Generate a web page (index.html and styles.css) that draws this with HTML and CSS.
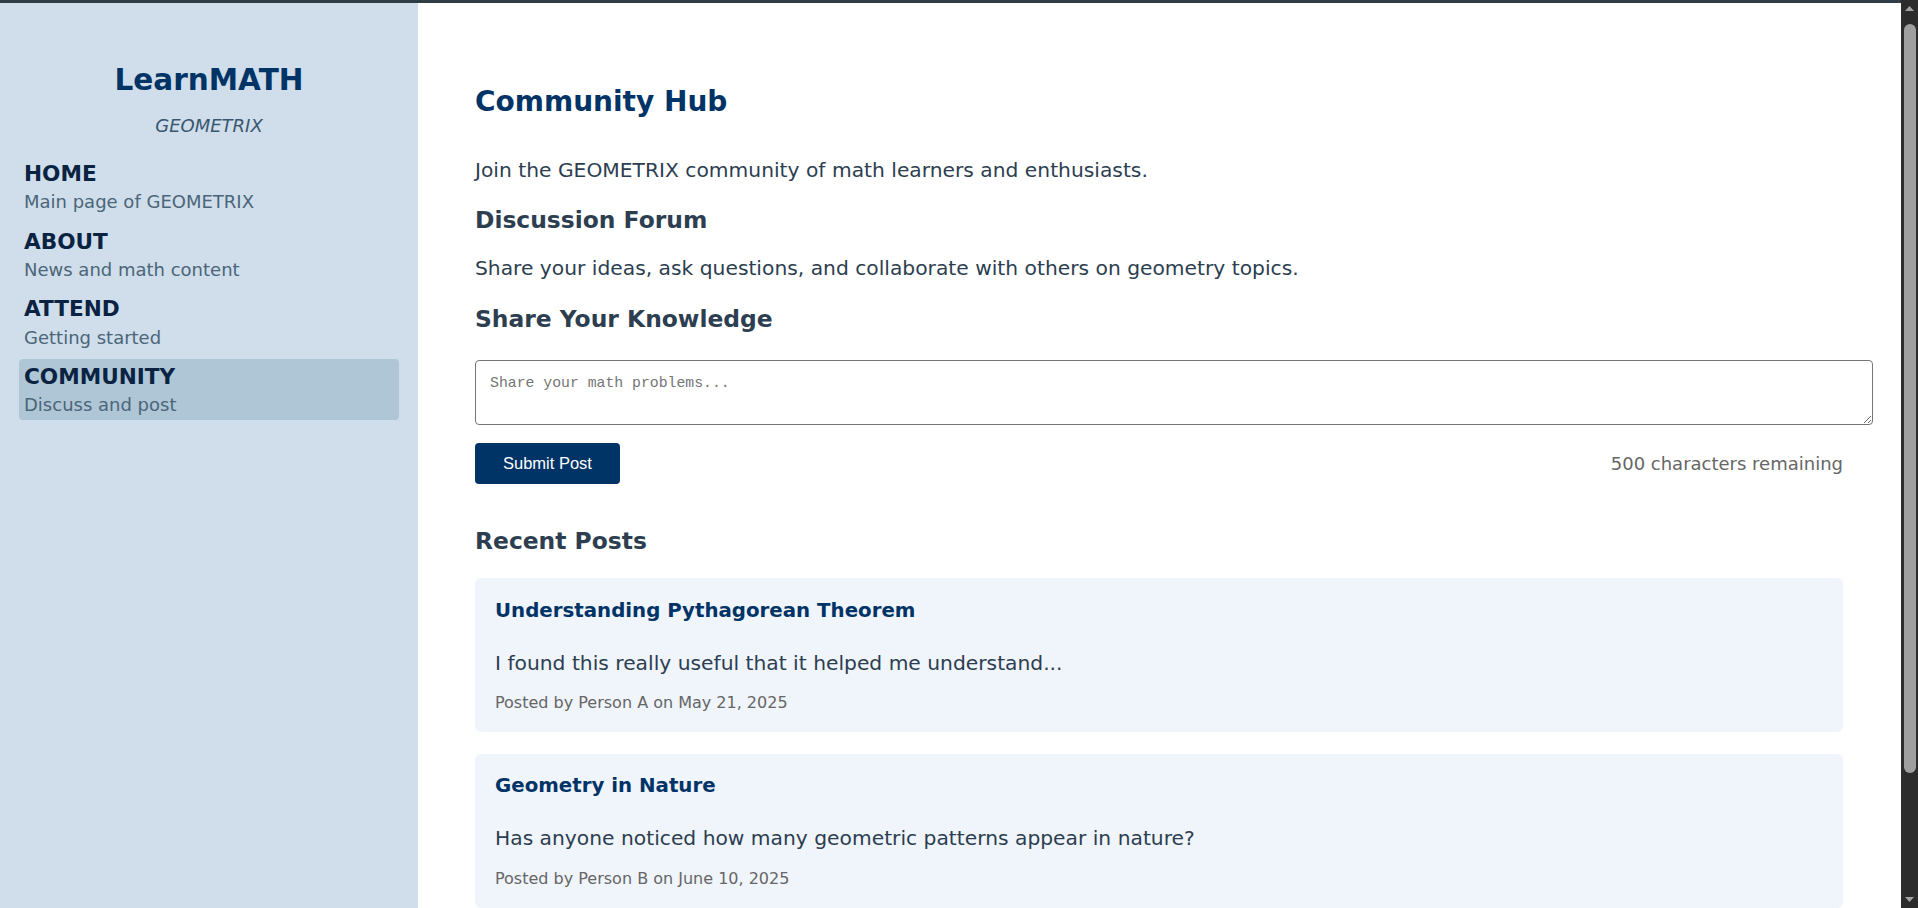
FILE: index.html
```html
<!DOCTYPE html>
<html lang="en">
<head>
<meta charset="utf-8">
<title>LearnMATH - Community Hub</title>
<link rel="stylesheet" href="styles.css">
</head>
<body>
<div class="layout">
  <aside class="sidebar">
    <div class="brand">
      <h1 class="brand-title">LearnMATH</h1>
      <p class="brand-sub">GEOMETRIX</p>
    </div>
    <nav class="nav">
      <a class="nav-item" href="#"><span class="nav-title">HOME</span><span class="nav-desc">Main page of GEOMETRIX</span></a>
      <a class="nav-item" href="#"><span class="nav-title">ABOUT</span><span class="nav-desc">News and math content</span></a>
      <a class="nav-item" href="#"><span class="nav-title">ATTEND</span><span class="nav-desc">Getting started</span></a>
      <a class="nav-item is-active" href="#"><span class="nav-title">COMMUNITY</span><span class="nav-desc">Discuss and post</span></a>
    </nav>
  </aside>
  <main class="main">
    <h1 class="page-title">Community Hub</h1>
    <p class="text text-lead">Join the GEOMETRIX community of math learners and enthusiasts.</p>
    <h2 class="section-title st-forum">Discussion Forum</h2>
    <p class="text text-forum">Share your ideas, ask questions, and collaborate with others on geometry topics.</p>
    <h2 class="section-title st-share">Share Your Knowledge</h2>
    <form class="post-form">
      <textarea class="post-input" placeholder="Share your math problems..."></textarea>
      <div class="form-row">
        <button class="submit-btn" type="button">Submit Post</button>
        <span class="counter">500 characters remaining</span>
      </div>
    </form>
    <h2 class="section-title st-recent">Recent Posts</h2>
    <div class="posts">
      <article class="post">
        <h3 class="post-title">Understanding Pythagorean Theorem</h3>
        <p class="post-body">I found this really useful that it helped me understand...</p>
        <p class="post-meta">Posted by Person A on May 21, 2025</p>
      </article>
      <article class="post">
        <h3 class="post-title">Geometry in Nature</h3>
        <p class="post-body">Has anyone noticed how many geometric patterns appear in nature?</p>
        <p class="post-meta">Posted by Person B on June 10, 2025</p>
      </article>
    </div>
  </main>
</div>
<div class="scrollbar" aria-hidden="true">
  <svg class="scroll-arrow" width="17" height="17" viewBox="0 0 17 17"><path d="M4 11 L8.5 6 L13 11 Z" fill="#a3a3a3"/></svg>
  <div class="scroll-track"><div class="scroll-thumb"></div></div>
  <svg class="scroll-arrow" width="17" height="17" viewBox="0 0 17 17"><path d="M4 6 L13 6 L8.5 11 Z" fill="#a3a3a3"/></svg>
</div>
</body>
</html>
```

FILE: styles.css
```css
html {
  background: #ffffff;
}

body {
  margin: 0;
  padding-right: 17px;
  border-top: 3px solid #2f3d45;
  font-family: "DejaVu Sans", Verdana, sans-serif;
  color: #2c3e50;
  background: #ffffff;
}

.layout {
  display: flex;
  align-items: stretch;
  min-height: 905px;
}

/* Sidebar */
.sidebar {
  width: 418px;
  flex-shrink: 0;
  box-sizing: border-box;
  padding: 60.3px 19px 40px;
  background: #cfdeea;
}

.brand {
  text-align: center;
}

.brand-title {
  margin: 0;
  font-size: 29.5px;
  line-height: 1.2;
  font-weight: bold;
  color: #003366;
}

.brand-sub {
  margin: 14px 0 0;
  font-size: 18px;
  line-height: 1.4;
  font-style: italic;
  color: #3a5670;
}

.nav {
  display: flex;
  flex-direction: column;
  gap: 6.3px;
  margin-top: 18px;
}

.nav-item {
  display: flex;
  flex-direction: column;
  padding: 3px 5px;
  border-radius: 4px;
  text-decoration: none;
}

.nav-item.is-active {
  background: #afc6d6;
}

.nav-title {
  font-size: 21.6px;
  line-height: 1.4;
  font-weight: bold;
  color: #0a2342;
}

.nav-desc {
  font-size: 18px;
  line-height: 1.4;
  color: #4b6579;
}

/* Main */
.main {
  flex: 1;
  min-width: 0;
  padding: 81.7px 58px 150px 57px;
  background: #ffffff;
}

.page-title {
  margin: 0 0 36.8px;
  font-size: 28px;
  line-height: 1.2;
  font-weight: bold;
  color: #003366;
}

.text {
  margin: 0;
  font-size: 20.25px;
  line-height: 1.5;
  color: #2c3e50;
}

.text-lead {
  margin-bottom: 19.9px;
}

.text-forum {
  margin-bottom: 21px;
}

.section-title {
  margin: 0;
  font-size: 23.4px;
  line-height: 1.3;
  font-weight: bold;
  color: #2c3e50;
}

.st-forum {
  margin-bottom: 17.2px;
}

.st-share {
  margin-bottom: 25.2px;
}

.st-recent {
  margin-top: 41.4px;
  margin-bottom: 22.3px;
}

.post-form {
  margin: 0;
}

.post-input {
  display: block;
  box-sizing: content-box;
  width: 100%;
  height: 35px;
  margin: 0;
  padding: 14px;
  border: 1px solid #767676;
  border-radius: 4px;
  background: #ffffff;
  color: #222222;
  font-family: "Liberation Mono", monospace;
  font-size: 14.8px;
  resize: vertical;
}

.post-input::placeholder {
  color: #757575;
}

.form-row {
  display: flex;
  justify-content: space-between;
  align-items: center;
  margin-top: 17.7px;
}

.submit-btn {
  padding: 11.3px 28px;
  border: none;
  border-radius: 4px;
  background: #003366;
  color: #ffffff;
  font-family: "Liberation Sans", Arial, sans-serif;
  font-size: 16.5px;
  line-height: normal;
  cursor: pointer;
}

.counter {
  font-size: 18px;
  color: #666666;
}

.posts {
  display: flex;
  flex-direction: column;
  gap: 22px;
}

.post {
  padding: 19.5px 20px 17px;
  border-radius: 6px;
  background: #f0f4fb;
}

.post-title {
  margin: 0 0 24px;
  font-size: 19.8px;
  line-height: 1.3;
  font-weight: bold;
  color: #003366;
}

.post-body {
  margin: 0 0 13px;
  font-size: 20.25px;
  line-height: 1.5;
  color: #2c3e50;
}

.post-meta {
  margin: 0;
  font-size: 16px;
  line-height: 1.5;
  color: #666666;
}

/* Browser scrollbar (dark) drawn over the right edge of the viewport */
.scrollbar {
  position: fixed;
  top: 0;
  right: 0;
  width: 17px;
  height: 100vh;
  display: flex;
  flex-direction: column;
  background: #2c2c2c;
}

.scroll-arrow {
  display: block;
  flex-shrink: 0;
}

.scroll-track {
  flex: 1;
  padding: 7px 2px 0 3px;
}

.scroll-thumb {
  height: 749px;
  border-radius: 6px;
  background: #9f9f9f;
}
```
